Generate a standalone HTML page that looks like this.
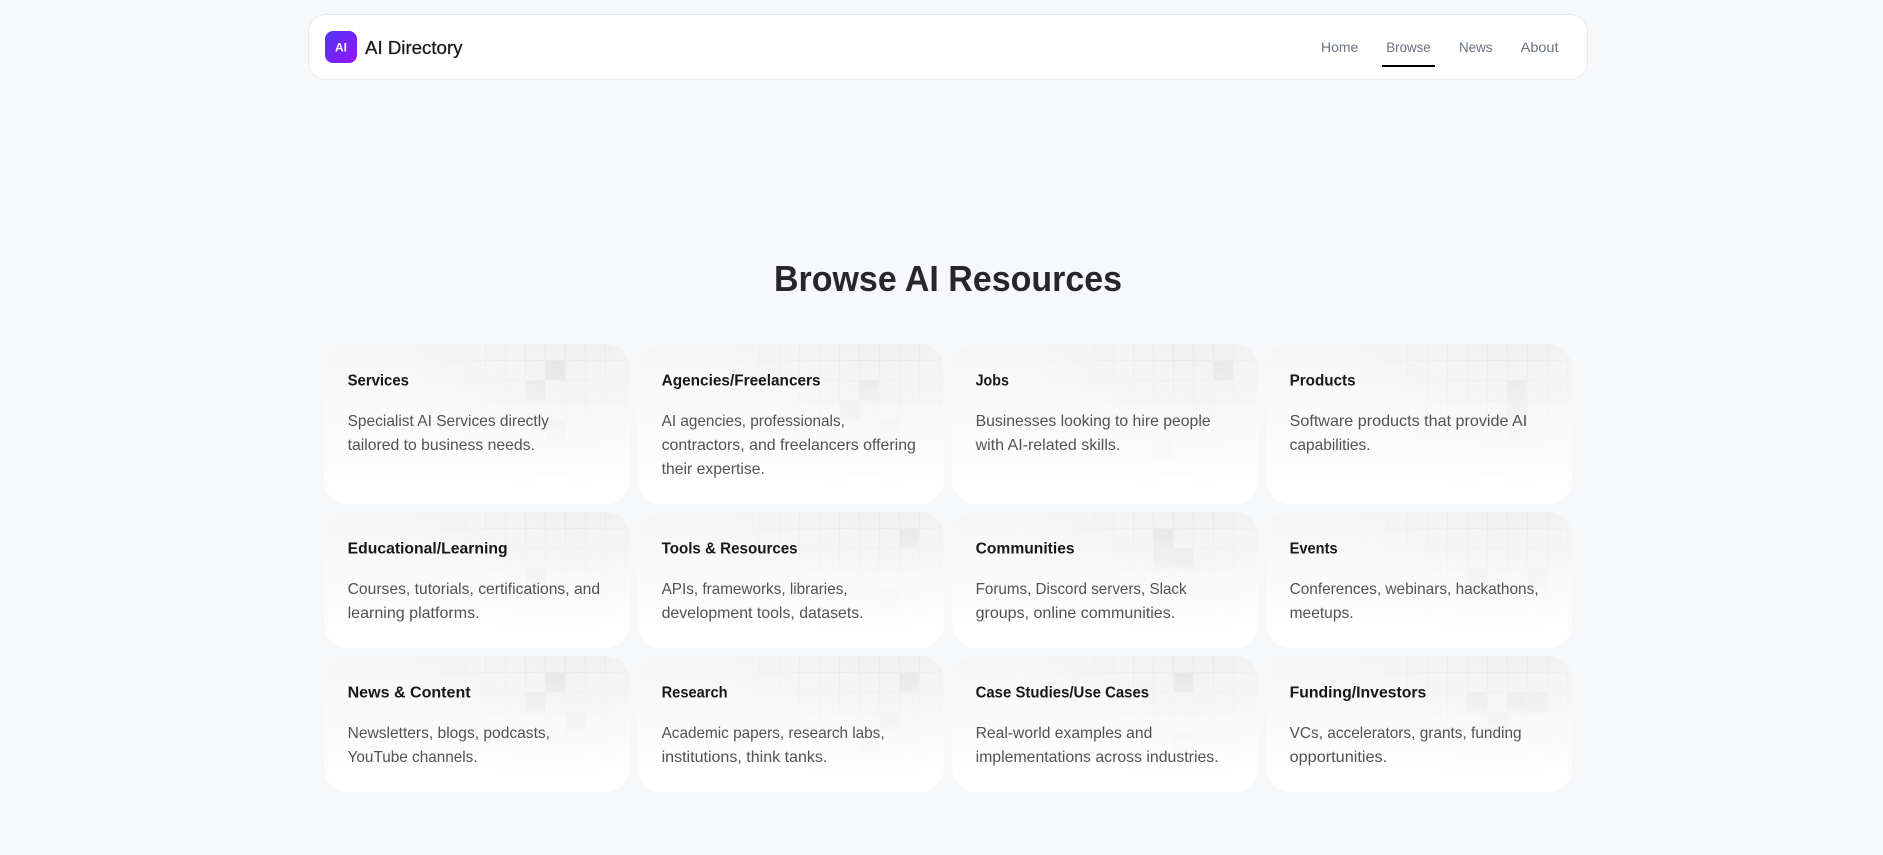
<!DOCTYPE html>
<html lang="en">
<head>
<meta charset="utf-8">
<title>AI Directory</title>
<style>
html,body{margin:0;padding:0;width:1883px;height:855px;overflow:hidden;background:#f7f8fa;font-family:"Liberation Sans",sans-serif}
#nav{position:absolute;left:308px;top:14px;width:1278px;height:64px;background:#fff;border:1px solid #e9eaee;border-radius:18px}
#logo{position:absolute;left:325px;top:31px;width:32px;height:32px;border-radius:8px;background:linear-gradient(135deg,#4f39f6,#9810fa)}
#ul{position:absolute;left:1382px;top:65px;width:53px;height:2px;background:#000}
.c{position:absolute;width:306px;border-radius:24px;overflow:hidden;background:linear-gradient(180deg,#f6f6f6,#fff)}
.m1{position:absolute;top:0;left:50%;margin-left:-80px;margin-top:-8px;width:100%;height:100%;-webkit-mask-image:linear-gradient(#fff,transparent);mask-image:linear-gradient(#fff,transparent)}
.m2{position:absolute;inset:0;background:linear-gradient(90deg,rgba(244,244,245,.3),rgba(212,212,216,.3));-webkit-mask-image:radial-gradient(farthest-side at top,#fff,transparent);mask-image:radial-gradient(farthest-side at top,#fff,transparent)}
.m2 svg{position:absolute;inset:0;width:100%;height:100%;mix-blend-mode:overlay;fill:rgba(0,0,0,.1);stroke:rgba(0,0,0,.06);overflow:visible}
.m2 svg rect{stroke-width:0}
#t{position:absolute;left:0;top:0}
#t text{font-family:"Liberation Sans",sans-serif}
.h{font-weight:700;font-size:16px;fill:#171717}
.d{font-size:16px;fill:#525252}
.n{font-size:14px;fill:#6b7280}
</style>
</head>
<body>
<div id="nav"></div>
<div id="logo"></div>
<div id="ul"></div>

<div class="c" style="left:324px;top:344px;height:160px"><div class="m1"><div class="m2"><svg><defs><pattern id="p1" width="20" height="20" patternUnits="userSpaceOnUse" x="-12" y="4"><path d="M.5 20V.5H20" fill="none"/></pattern></defs><rect width="100%" height="100%" fill="url(#p1)"/><svg x="-12" y="4" style="overflow:visible"><rect x="161" y="21" width="19" height="19"/><rect x="141" y="41" width="19" height="19"/><rect x="161" y="81" width="19" height="19"/></svg></svg></div></div></div>
<div class="c" style="left:638px;top:344px;height:160px"><div class="m1"><div class="m2"><svg><defs><pattern id="p2" width="20" height="20" patternUnits="userSpaceOnUse" x="-12" y="4"><path d="M.5 20V.5H20" fill="none"/></pattern></defs><rect width="100%" height="100%" fill="url(#p2)"/><svg x="-12" y="4" style="overflow:visible"><rect x="161" y="41" width="19" height="19"/><rect x="141" y="61" width="19" height="19"/><rect x="181" y="81" width="19" height="19"/></svg></svg></div></div></div>
<div class="c" style="left:952px;top:344px;height:160px"><div class="m1"><div class="m2"><svg><defs><pattern id="p3" width="20" height="20" patternUnits="userSpaceOnUse" x="-12" y="4"><path d="M.5 20V.5H20" fill="none"/></pattern></defs><rect width="100%" height="100%" fill="url(#p3)"/><svg x="-12" y="4" style="overflow:visible"><rect x="201" y="21" width="19" height="19"/><rect x="141" y="101" width="19" height="19"/></svg></svg></div></div></div>
<div class="c" style="left:1266px;top:344px;height:160px"><div class="m1"><div class="m2"><svg><defs><pattern id="p4" width="20" height="20" patternUnits="userSpaceOnUse" x="-12" y="4"><path d="M.5 20V.5H20" fill="none"/></pattern></defs><rect width="100%" height="100%" fill="url(#p4)"/><svg x="-12" y="4" style="overflow:visible"><rect x="181" y="41" width="19" height="19"/><rect x="181" y="61" width="19" height="19"/><rect x="181" y="81" width="19" height="19"/></svg></svg></div></div></div>

<div class="c" style="left:324px;top:512px;height:136px"><div class="m1"><div class="m2"><svg><defs><pattern id="p5" width="20" height="20" patternUnits="userSpaceOnUse" x="-12" y="4"><path d="M.5 20V.5H20" fill="none"/></pattern></defs><rect width="100%" height="100%" fill="url(#p5)"/><svg x="-12" y="4" style="overflow:visible"><rect x="141" y="61" width="19" height="19"/></svg></svg></div></div></div>
<div class="c" style="left:638px;top:512px;height:136px"><div class="m1"><div class="m2"><svg><defs><pattern id="p6" width="20" height="20" patternUnits="userSpaceOnUse" x="-12" y="4"><path d="M.5 20V.5H20" fill="none"/></pattern></defs><rect width="100%" height="100%" fill="url(#p6)"/><svg x="-12" y="4" style="overflow:visible"><rect x="201" y="21" width="19" height="19"/><rect x="181" y="81" width="19" height="19"/></svg></svg></div></div></div>
<div class="c" style="left:952px;top:512px;height:136px"><div class="m1"><div class="m2"><svg><defs><pattern id="p7" width="20" height="20" patternUnits="userSpaceOnUse" x="-12" y="4"><path d="M.5 20V.5H20" fill="none"/></pattern></defs><rect width="100%" height="100%" fill="url(#p7)"/><svg x="-12" y="4" style="overflow:visible"><rect x="141" y="21" width="19" height="19"/><rect x="141" y="41" width="19" height="19"/><rect x="161" y="41" width="19" height="19"/></svg></svg></div></div></div>
<div class="c" style="left:1266px;top:512px;height:136px"><div class="m1"><div class="m2"><svg><defs><pattern id="p8" width="20" height="20" patternUnits="userSpaceOnUse" x="-12" y="4"><path d="M.5 20V.5H20" fill="none"/></pattern></defs><rect width="100%" height="100%" fill="url(#p8)"/><svg x="-12" y="4" style="overflow:visible"><rect x="141" y="61" width="19" height="19"/><rect x="201" y="61" width="19" height="19"/></svg></svg></div></div></div>

<div class="c" style="left:324px;top:656px;height:136px"><div class="m1"><div class="m2"><svg><defs><pattern id="p9" width="20" height="20" patternUnits="userSpaceOnUse" x="-12" y="4"><path d="M.5 20V.5H20" fill="none"/></pattern></defs><rect width="100%" height="100%" fill="url(#p9)"/><svg x="-12" y="4" style="overflow:visible"><rect x="161" y="21" width="19" height="19"/><rect x="141" y="41" width="19" height="19"/><rect x="181" y="61" width="19" height="19"/></svg></svg></div></div></div>
<div class="c" style="left:638px;top:656px;height:136px"><div class="m1"><div class="m2"><svg><defs><pattern id="p10" width="20" height="20" patternUnits="userSpaceOnUse" x="-12" y="4"><path d="M.5 20V.5H20" fill="none"/></pattern></defs><rect width="100%" height="100%" fill="url(#p10)"/><svg x="-12" y="4" style="overflow:visible"><rect x="201" y="21" width="19" height="19"/><rect x="181" y="61" width="19" height="19"/><rect x="161" y="81" width="19" height="19"/></svg></svg></div></div></div>
<div class="c" style="left:952px;top:656px;height:136px"><div class="m1"><div class="m2"><svg><defs><pattern id="p11" width="20" height="20" patternUnits="userSpaceOnUse" x="-12" y="4"><path d="M.5 20V.5H20" fill="none"/></pattern></defs><rect width="100%" height="100%" fill="url(#p11)"/><svg x="-12" y="4" style="overflow:visible"><rect x="161" y="21" width="19" height="19"/><rect x="161" y="81" width="19" height="19"/></svg></svg></div></div></div>
<div class="c" style="left:1266px;top:656px;height:136px"><div class="m1"><div class="m2"><svg><defs><pattern id="p12" width="20" height="20" patternUnits="userSpaceOnUse" x="-12" y="4"><path d="M.5 20V.5H20" fill="none"/></pattern></defs><rect width="100%" height="100%" fill="url(#p12)"/><svg x="-12" y="4" style="overflow:visible"><rect x="141" y="41" width="19" height="19"/><rect x="181" y="41" width="19" height="19"/><rect x="201" y="41" width="19" height="19"/><rect x="161" y="61" width="19" height="19"/></svg></svg></div></div></div>

<svg id="t" width="1883" height="855" viewBox="0 0 1883 855">
<text x="335" y="51.5" font-size="12" font-weight="700" fill="#fff" textLength="12" lengthAdjust="spacingAndGlyphs">AI</text>
<text x="365" y="54" font-size="18" fill="#18181b" stroke="#18181b" stroke-width=".25" textLength="97.5" lengthAdjust="spacingAndGlyphs">AI Directory</text>
<text class="n" x="1321" y="52" textLength="37.3" lengthAdjust="spacingAndGlyphs">Home</text>
<text class="n" x="1386.3" y="52" textLength="44.4" lengthAdjust="spacingAndGlyphs">Browse</text>
<text class="n" x="1459" y="52" textLength="33.5" lengthAdjust="spacingAndGlyphs">News</text>
<text class="n" x="1520.7" y="52" textLength="37.8" lengthAdjust="spacingAndGlyphs">About</text>
<text x="774" y="291" font-size="36" font-weight="700" fill="#27272a" textLength="348" lengthAdjust="spacingAndGlyphs">Browse AI Resources</text>

<text class="h" x="347.6" y="385.7" textLength="61.3" lengthAdjust="spacingAndGlyphs">Services</text>
<text class="d" x="347.6" y="425.8" textLength="201.3" lengthAdjust="spacingAndGlyphs">Specialist AI Services directly</text>
<text class="d" x="347.6" y="449.8" textLength="187.3" lengthAdjust="spacingAndGlyphs">tailored to business needs.</text>

<text class="h" x="661.6" y="385.7" textLength="159" lengthAdjust="spacingAndGlyphs">Agencies/Freelancers</text>
<text class="d" x="661.6" y="425.8" textLength="183.3" lengthAdjust="spacingAndGlyphs">AI agencies, professionals,</text>
<text class="d" x="661.6" y="449.8" textLength="254.3" lengthAdjust="spacingAndGlyphs">contractors, and freelancers offering</text>
<text class="d" x="661.6" y="473.8" textLength="103.3" lengthAdjust="spacingAndGlyphs">their expertise.</text>

<text class="h" x="975.6" y="385.7" textLength="33.3" lengthAdjust="spacingAndGlyphs">Jobs</text>
<text class="d" x="975.6" y="425.8" textLength="235" lengthAdjust="spacingAndGlyphs">Businesses looking to hire people</text>
<text class="d" x="975.6" y="449.8" textLength="144.7" lengthAdjust="spacingAndGlyphs">with AI-related skills.</text>

<text class="h" x="1289.6" y="385.7" textLength="66" lengthAdjust="spacingAndGlyphs">Products</text>
<text class="d" x="1289.6" y="425.8" textLength="237.7" lengthAdjust="spacingAndGlyphs">Software products that provide AI</text>
<text class="d" x="1289.6" y="449.8" textLength="81" lengthAdjust="spacingAndGlyphs">capabilities.</text>

<text class="h" x="347.6" y="553.7" textLength="160" lengthAdjust="spacingAndGlyphs">Educational/Learning</text>
<text class="d" x="347.6" y="593.8" textLength="252.5" lengthAdjust="spacingAndGlyphs">Courses, tutorials, certifications, and</text>
<text class="d" x="347.6" y="617.8" textLength="132" lengthAdjust="spacingAndGlyphs">learning platforms.</text>

<text class="h" x="661.6" y="553.7" textLength="136" lengthAdjust="spacingAndGlyphs">Tools &amp; Resources</text>
<text class="d" x="661.6" y="593.8" textLength="186" lengthAdjust="spacingAndGlyphs">APIs, frameworks, libraries,</text>
<text class="d" x="661.6" y="617.8" textLength="202" lengthAdjust="spacingAndGlyphs">development tools, datasets.</text>

<text class="h" x="975.6" y="553.7" textLength="99" lengthAdjust="spacingAndGlyphs">Communities</text>
<text class="d" x="975.6" y="593.8" textLength="211" lengthAdjust="spacingAndGlyphs">Forums, Discord servers, Slack</text>
<text class="d" x="975.6" y="617.8" textLength="199.6" lengthAdjust="spacingAndGlyphs">groups, online communities.</text>

<text class="h" x="1289.6" y="553.7" textLength="48" lengthAdjust="spacingAndGlyphs">Events</text>
<text class="d" x="1289.6" y="593.8" textLength="249" lengthAdjust="spacingAndGlyphs">Conferences, webinars, hackathons,</text>
<text class="d" x="1289.6" y="617.8" textLength="64" lengthAdjust="spacingAndGlyphs">meetups.</text>

<text class="h" x="347.6" y="697.7" textLength="123" lengthAdjust="spacingAndGlyphs">News &amp; Content</text>
<text class="d" x="347.6" y="737.8" textLength="202.4" lengthAdjust="spacingAndGlyphs">Newsletters, blogs, podcasts,</text>
<text class="d" x="347.6" y="761.8" textLength="130" lengthAdjust="spacingAndGlyphs">YouTube channels.</text>

<text class="h" x="661.6" y="697.7" textLength="66" lengthAdjust="spacingAndGlyphs">Research</text>
<text class="d" x="661.6" y="737.8" textLength="223" lengthAdjust="spacingAndGlyphs">Academic papers, research labs,</text>
<text class="d" x="661.6" y="761.8" textLength="165.8" lengthAdjust="spacingAndGlyphs">institutions, think tanks.</text>

<text class="h" x="975.6" y="697.7" textLength="173.5" lengthAdjust="spacingAndGlyphs">Case Studies/Use Cases</text>
<text class="d" x="975.6" y="737.8" textLength="176.7" lengthAdjust="spacingAndGlyphs">Real-world examples and</text>
<text class="d" x="975.6" y="761.8" textLength="243" lengthAdjust="spacingAndGlyphs">implementations across industries.</text>

<text class="h" x="1289.6" y="697.7" textLength="136.7" lengthAdjust="spacingAndGlyphs">Funding/Investors</text>
<text class="d" x="1289.6" y="737.8" textLength="232" lengthAdjust="spacingAndGlyphs">VCs, accelerators, grants, funding</text>
<text class="d" x="1289.6" y="761.8" textLength="97.6" lengthAdjust="spacingAndGlyphs">opportunities.</text>
</svg>
</body>
</html>
